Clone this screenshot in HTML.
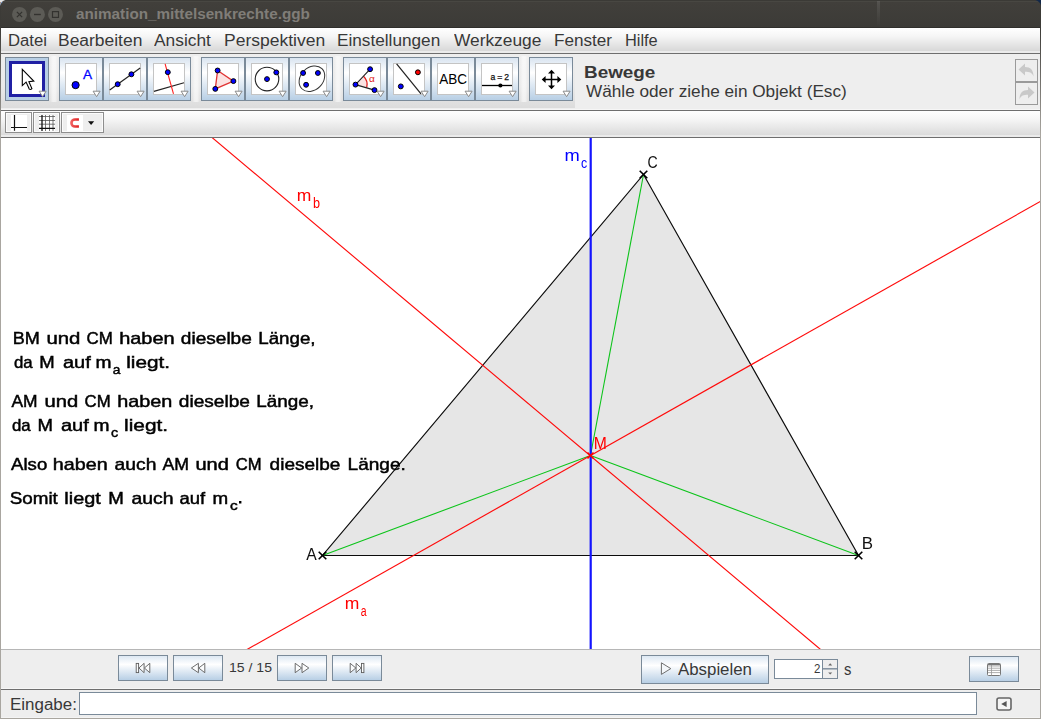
<!DOCTYPE html>
<html><head><meta charset="utf-8"><title>animation_mittelsenkrechte.ggb</title>
<style>
html,body{margin:0;padding:0;}
body{width:1041px;height:719px;overflow:hidden;background:#eeeeee;position:relative;font-family:"Liberation Sans",sans-serif;}
.abs{position:absolute;}
.t{position:absolute;white-space:nowrap;line-height:1;color:#333;font-size:16px;transform-origin:0 0;}
#title{left:0;top:0;width:1041px;height:28px;background:linear-gradient(#3b3a36 0px,#3b3a36 1px,#484742 1px,#484742 2px,#413f3b 2px,#3c3b37 27px,#302f2c 27px,#302f2c 28px);}
#menubar{left:1px;top:28px;width:1039px;height:25px;background:linear-gradient(#ffffff 0px,#f6f6f6 8px,#d8d8d8 23px,#ebebeb 23px,#ebebeb 25px);}
#toolbar{left:1px;top:54px;width:574px;height:54px;background:linear-gradient(#eeeeee 0%,#eaeaea 60%,#dcdcdc 100%);}
.tb{position:absolute;top:57px;width:42px;height:42px;border:1px solid #7a8a99;background:linear-gradient(#d9e4f0 0%,#ffffff 35%,#e3ecf5 60%,#b8cfe5 100%);}
.tb .ic{position:absolute;left:5px;top:5px;width:30px;height:30px;border:1px solid #c4c4c4;background:#fff;}
.tb svg.i{position:absolute;left:5px;top:5px;width:32px;height:32px;}
.tb svg.dd{position:absolute;left:32px;top:32px;width:10px;height:8px;}
.nb{position:absolute;border:1px solid #7a8a99;background:linear-gradient(#dde8f3 0%,#ffffff 35%,#e3ecf5 60%,#b8cfe5 100%);box-sizing:border-box;}
.sb{position:absolute;top:112px;height:21px;border:1px solid #8e8e8e;box-sizing:border-box;background:#eeeeee;box-shadow:inset 0 0 0 1px #fbfbfb;}
</style></head><body>
<div class="abs" id="title"></div>
<div class="abs" id="menubar"></div>
<div class="abs" style="left:1px;top:53px;width:1039px;height:1px;background:#6e6e6e"></div>
<div class="abs" id="toolbar"></div>
<div class="abs" style="left:1px;top:109px;width:1039px;height:1px;background:#f6f6f6"></div>
<div class="abs" style="left:1px;top:110px;width:1039px;height:1px;background:#6e6e6e"></div>
<div class="abs" id="stylebar" style="left:1px;top:111px;width:1039px;height:26px;background:linear-gradient(#fefefe 0px,#f6f6f6 8px,#dbdbdb 24px,#ebebeb 24px,#ebebeb 26px)"></div>
<div class="abs" style="left:1px;top:137px;width:1039px;height:1px;background:#6e6e6e"></div>
<div class="abs" id="canvas" style="left:1px;top:138px;width:1039px;height:511px;background:#fff;overflow:hidden"></div>
<div class="abs" style="left:1px;top:649px;width:1039px;height:1px;background:#b6b6b6"></div>
<div class="abs" style="left:1px;top:688px;width:1039px;height:1px;background:#f6f6f6"></div>
<div class="abs" style="left:1px;top:689px;width:1039px;height:1px;background:#6e6e6e"></div>
<div class="abs" style="left:1px;top:717px;width:1039px;height:1px;background:#f4f4f4"></div>
<div class="abs" style="left:0px;top:718px;width:1041px;height:1px;background:#a9a6a0"></div>
<div class="abs" style="left:0;top:4px;width:1px;height:715px;background:linear-gradient(#3c3b37 0px,#3c3b37 24px,#a9a6a0 130px,#a9a6a0 100%)"></div>
<div class="abs" style="left:1040px;top:4px;width:1px;height:715px;background:linear-gradient(#3c3b37 0px,#3c3b37 24px,#a9a6a0 130px,#a9a6a0 100%)"></div>
<svg class="abs" style="left:0;top:0" width="80" height="28" viewBox="0 0 80 28">
<circle cx="19.5" cy="14.4" r="7.5" fill="#5c5b56"/><circle cx="37.4" cy="14.4" r="7.5" fill="#5c5b56"/><circle cx="55.5" cy="14.4" r="7.5" fill="#5c5b56"/>
<path d="M16.9 11.9L22.1 17.1M22.1 11.9L16.9 17.1" stroke="#33322f" stroke-width="1.3" fill="none"/>
<path d="M34 14.5H40.8" stroke="#33322f" stroke-width="1.4" fill="none"/>
<rect x="52.5" y="11.6" width="6" height="5.8" stroke="#33322f" stroke-width="1.2" fill="none"/>
</svg>
<div class="abs" style="left:877px;top:1px;width:3px;height:26px;background:linear-gradient(rgba(255,255,255,0.10),rgba(255,255,255,0.05) 50%,rgba(255,255,255,0.0))"></div>
<svg class="abs" style="left:0;top:0" width="1041" height="8" viewBox="0 0 1041 8">
<path d="M0 0H5.3Q1.6 0.9 0 5.4Z" fill="#e6e6e6"/><rect x="0" y="2" width="1" height="1.4" fill="#b08c7c"/><rect x="1" y="2" width="1.2" height="1.2" fill="#7aa0d0"/><rect x="0" y="3.6" width="1" height="1.6" fill="#6f8194"/>
<path d="M1041 0H1035.4Q1039.6 1.2 1041 5.2Z" fill="#12284a"/>
</svg>
<div class="tb" style="left:5px;background:#b8cfe5"><div class="ic" style="left:3px;top:3px;border:3px solid #2020a4;"></div>
<svg class="i" viewBox="0 0 32 32"><path d="M11.3 6.4V22.6L15.1 19.1L18.3 26.1Q19.6 27 20.9 25.6L17.9 18.6L22.8 18Z" fill="#fff" stroke="#000" stroke-width="1.1" stroke-linejoin="miter"/></svg>
<svg class="dd" viewBox="0 0 10 8"><path d="M1.1 1.2H8.1L4.6 6.7Z" fill="#fff" stroke="#8a8a8a" stroke-width="1"/></svg></div>
<div class="tb" style="left:59px"><div class="ic"></div>
<svg class="i" viewBox="0 0 32 32"><circle cx="10.6" cy="22.1" r="3.6" fill="#0000ff" stroke="#000" stroke-width="1"/><text x="17.9" y="16.1" font-family="Liberation Sans, sans-serif" font-size="13.6" fill="#0000ff" stroke="#0000ff" stroke-width="0.3">A</text></svg>
<svg class="dd" viewBox="0 0 10 8"><path d="M1.1 1.2H8.1L4.6 6.7Z" fill="#fff" stroke="#8a8a8a" stroke-width="1"/></svg></div>
<div class="tb" style="left:103px"><div class="ic"></div>
<svg class="i" viewBox="0 0 32 32"><line x1="0.7" y1="26.9" x2="31.2" y2="5.1" stroke="#222" stroke-width="1.2"/><circle cx="8.7" cy="21.2" r="2.45" fill="#0000ff" stroke="#000" stroke-width="1"/><circle cx="22.4" cy="11.3" r="2.45" fill="#0000ff" stroke="#000" stroke-width="1"/></svg>
<svg class="dd" viewBox="0 0 10 8"><path d="M1.1 1.2H8.1L4.6 6.7Z" fill="#fff" stroke="#8a8a8a" stroke-width="1"/></svg></div>
<div class="tb" style="left:147px"><div class="ic"></div>
<svg class="i" viewBox="0 0 32 32"><line x1="0.9" y1="28.4" x2="31" y2="19.8" stroke="#222" stroke-width="1.1"/><line x1="12.1" y1="0.8" x2="20.5" y2="30.9" stroke="#ff2020" stroke-width="1.1"/><circle cx="14.8" cy="9.2" r="2.45" fill="#0000ff" stroke="#000" stroke-width="1"/></svg>
<svg class="dd" viewBox="0 0 10 8"><path d="M1.1 1.2H8.1L4.6 6.7Z" fill="#fff" stroke="#8a8a8a" stroke-width="1"/></svg></div>
<div class="tb" style="left:201px"><div class="ic"></div>
<svg class="i" viewBox="0 0 32 32"><polygon points="10.6,7.5 26.4,18.1 8.3,25.9" fill="#fbe2e2" stroke="#e03434" stroke-width="1.3"/><circle cx="10.6" cy="7.5" r="2.45" fill="#0000ff" stroke="#000" stroke-width="1"/><circle cx="26.4" cy="18.1" r="2.45" fill="#0000ff" stroke="#000" stroke-width="1"/><circle cx="8.3" cy="25.9" r="2.45" fill="#0000ff" stroke="#000" stroke-width="1"/></svg>
<svg class="dd" viewBox="0 0 10 8"><path d="M1.1 1.2H8.1L4.6 6.7Z" fill="#fff" stroke="#8a8a8a" stroke-width="1"/></svg></div>
<div class="tb" style="left:245px"><div class="ic"></div>
<svg class="i" viewBox="0 0 32 32"><circle cx="16" cy="16.1" r="11.8" fill="none" stroke="#222" stroke-width="1.1"/><circle cx="16" cy="16.1" r="2.45" fill="#0000ff" stroke="#000" stroke-width="1"/><circle cx="25.3" cy="9.4" r="2.45" fill="#0000ff" stroke="#000" stroke-width="1"/></svg>
<svg class="dd" viewBox="0 0 10 8"><path d="M1.1 1.2H8.1L4.6 6.7Z" fill="#fff" stroke="#8a8a8a" stroke-width="1"/></svg></div>
<div class="tb" style="left:289px"><div class="ic"></div>
<svg class="i" viewBox="0 0 32 32"><ellipse cx="16.9" cy="15.7" rx="14.2" ry="11.2" transform="rotate(-45 16.9 15.7)" fill="none" stroke="#333" stroke-width="1"/><circle cx="8.1" cy="10" r="2.45" fill="#0000ff" stroke="#000" stroke-width="1"/><circle cx="22.9" cy="10" r="2.45" fill="#0000ff" stroke="#000" stroke-width="1"/><circle cx="11.1" cy="21.8" r="2.45" fill="#0000ff" stroke="#000" stroke-width="1"/></svg>
<svg class="dd" viewBox="0 0 10 8"><path d="M1.1 1.2H8.1L4.6 6.7Z" fill="#fff" stroke="#8a8a8a" stroke-width="1"/></svg></div>
<div class="tb" style="left:343px"><div class="ic"></div>
<svg class="i" viewBox="0 0 32 32"><path d="M6.5 21.6L14.5 13.2A11.6 11.6 0 0 1 17.7 24.6Z" fill="#fbe2e2" stroke="none"/><path d="M14.5 13.2A11.6 11.6 0 0 1 17.7 24.6" fill="none" stroke="#e02020" stroke-width="1.3"/><path d="M21.1 6.2L6.5 21.6L25.5 27.1" fill="none" stroke="#222" stroke-width="1.1"/><text x="20" y="19.3" font-family="Liberation Sans, sans-serif" font-size="9.5" fill="#e02020" textLength="5.8" lengthAdjust="spacingAndGlyphs">α</text><circle cx="6.5" cy="21.6" r="2.45" fill="#0000ff" stroke="#000" stroke-width="1"/><circle cx="21.1" cy="6.2" r="2.45" fill="#0000ff" stroke="#000" stroke-width="1"/><circle cx="25.5" cy="27.1" r="2.45" fill="#0000ff" stroke="#000" stroke-width="1"/></svg>
<svg class="dd" viewBox="0 0 10 8"><path d="M1.1 1.2H8.1L4.6 6.7Z" fill="#fff" stroke="#8a8a8a" stroke-width="1"/></svg></div>
<div class="tb" style="left:387px"><div class="ic"></div>
<svg class="i" viewBox="0 0 32 32"><line x1="3.6" y1="0.8" x2="28" y2="30.9" stroke="#222" stroke-width="1.2"/><circle cx="24.9" cy="9.3" r="2.45" fill="#ff0000" stroke="#000" stroke-width="1"/><circle cx="7.8" cy="23.4" r="2.45" fill="#0000ff" stroke="#000" stroke-width="1"/></svg>
<svg class="dd" viewBox="0 0 10 8"><path d="M1.1 1.2H8.1L4.6 6.7Z" fill="#fff" stroke="#8a8a8a" stroke-width="1"/></svg></div>
<div class="tb" style="left:431px"><div class="ic"></div>
<svg class="i" viewBox="0 0 32 32"><text x="2.2" y="20.8" font-family="Liberation Sans, sans-serif" font-size="13.8" fill="#000" textLength="27.8" lengthAdjust="spacingAndGlyphs">ABC</text></svg>
<svg class="dd" viewBox="0 0 10 8"><path d="M1.1 1.2H8.1L4.6 6.7Z" fill="#fff" stroke="#8a8a8a" stroke-width="1"/></svg></div>
<div class="tb" style="left:475px"><div class="ic"></div>
<svg class="i" viewBox="0 0 32 32"><text x="9.5" y="16.8" font-family="Liberation Sans, sans-serif" font-size="8.6" fill="#111" stroke="#111" stroke-width="0.25" textLength="18.6" lengthAdjust="spacing">a = 2</text><line x1="1" y1="22.5" x2="31" y2="22.5" stroke="#000" stroke-width="1.3"/><circle cx="19.4" cy="22.5" r="2.1" fill="#000"/></svg>
<svg class="dd" viewBox="0 0 10 8"><path d="M1.1 1.2H8.1L4.6 6.7Z" fill="#fff" stroke="#8a8a8a" stroke-width="1"/></svg></div>
<div class="tb" style="left:529px"><div class="ic"></div>
<svg class="i" viewBox="0 0 32 32"><path d="M16.5 8.5V24.5M8.5 16.5H24.5" stroke="#000" stroke-width="1.5" fill="none"/><path d="M16.5 6.7L20 10.6H13ZM16.5 26.3L20 22.4H13ZM6.7 16.5L10.6 13V20ZM26.3 16.5L22.4 13V20Z" fill="#000"/></svg>
<svg class="dd" viewBox="0 0 10 8"><path d="M1.1 1.2H8.1L4.6 6.7Z" fill="#fff" stroke="#8a8a8a" stroke-width="1"/></svg></div>
<div class="abs" style="left:50px;top:56px;width:8px;height:46px;background:linear-gradient(to right,rgba(255,255,255,0),rgba(255,255,255,0.55) 35%,rgba(255,255,255,0.55) 65%,rgba(255,255,255,0))"></div>
<div class="abs" style="left:192px;top:56px;width:8px;height:46px;background:linear-gradient(to right,rgba(255,255,255,0),rgba(255,255,255,0.55) 35%,rgba(255,255,255,0.55) 65%,rgba(255,255,255,0))"></div>
<div class="abs" style="left:334px;top:56px;width:8px;height:46px;background:linear-gradient(to right,rgba(255,255,255,0),rgba(255,255,255,0.55) 35%,rgba(255,255,255,0.55) 65%,rgba(255,255,255,0))"></div>
<div class="abs" style="left:520px;top:56px;width:8px;height:46px;background:linear-gradient(to right,rgba(255,255,255,0),rgba(255,255,255,0.55) 35%,rgba(255,255,255,0.55) 65%,rgba(255,255,255,0))"></div>
<div class="abs" style="left:1015px;top:59px;width:21px;height:21px;border:1px solid #9a9a9a;background:#eeeeee"></div>
<div class="abs" style="left:1015px;top:82px;width:21px;height:21px;border:1px solid #9a9a9a;background:#eeeeee"></div>
<svg class="abs" style="left:1015px;top:59px" width="23" height="46" viewBox="0 0 23 46"><path d="M3.5 10.5L10 4.5V8C15.5 8 18.5 11 18.5 17.5C17 13.5 14.5 12.8 10 12.8V16.5Z" fill="#c9c9c9"/><path d="M19.5 33.5L13 27.5V31C7.5 31 4.5 34 4.5 40.5C6 36.5 8.5 35.8 13 35.8V39.5Z" fill="#c9c9c9"/></svg>
<div class="sb" style="left:5px;width:27px"></div><div class="sb" style="left:33px;width:27px"></div><div class="sb" style="left:61px;width:43px"></div>
<svg class="abs" style="left:0;top:111px" width="110" height="26" viewBox="0 0 110 26"><defs><linearGradient id="mg" gradientUnits="userSpaceOnUse" x1="70" x2="79" y1="0" y2="0"><stop offset="0" stop-color="#f46a6a"/><stop offset="1" stop-color="#de1c1c"/></linearGradient></defs><rect x="11" y="4" width="16" height="16" fill="#fff"/><rect x="39" y="4" width="16" height="16" fill="#fff"/><rect x="67" y="4" width="16" height="16" fill="#fff"/><path d="M14.5 4V19.8M11 16.5H27" stroke="#111" stroke-width="1.2" fill="none"/><path d="M45.5 4V20M49.5 4V20M53 4V20M39 5.5H55M39 9.5H55M39 13.2H55" stroke="#555" stroke-width="0.8" fill="none"/><path d="M42 4V20M39 17.3H55" stroke="#111" stroke-width="1.3" fill="none"/><path d="M78.9 8.45H74.95A3.55 3.55 0 0 0 74.95 15.55H78.9" stroke="url(#mg)" stroke-width="2.6" fill="none" stroke-linecap="butt"/><path d="M88 10.3H94.2L91.1 14Z" fill="#111"/></svg>
<div class="nb" style="left:118px;top:655px;width:50px;height:26px"></div>
<div class="nb" style="left:173px;top:655px;width:50px;height:26px"></div>
<div class="nb" style="left:277px;top:655px;width:50px;height:26px"></div>
<div class="nb" style="left:332px;top:655px;width:50px;height:26px"></div>
<div class="nb" style="left:641px;top:655px;width:128px;height:29px"></div>
<div class="nb" style="left:969px;top:656px;width:50px;height:26px"></div>
<svg class="abs" style="left:0;top:0" width="1041" height="719" viewBox="0 0 1041 719">
<rect x="136.2" y="663.4" width="2.4" height="9.2" fill="#fbfcfd" stroke="#5c5c5c" stroke-width="0.9" stroke-linejoin="miter"/>
<path d="M138.9 668L144.1 663.3V672.7Z" fill="#fbfcfd" stroke="#5c5c5c" stroke-width="0.9" stroke-linejoin="miter"/>
<path d="M144.4 668L149.8 663.3V672.7Z" fill="#fbfcfd" stroke="#5c5c5c" stroke-width="0.9" stroke-linejoin="miter"/>
<path d="M191.4 668L198.4 663.3V672.7Z" fill="#fbfcfd" stroke="#5c5c5c" stroke-width="0.9" stroke-linejoin="miter"/>
<path d="M198.7 668L204.8 663.3V672.7Z" fill="#fbfcfd" stroke="#5c5c5c" stroke-width="0.9" stroke-linejoin="miter"/>
<path d="M301.6 668L295.2 663.3V672.7Z" fill="#fbfcfd" stroke="#5c5c5c" stroke-width="0.9" stroke-linejoin="miter"/>
<path d="M308.8 668L302.0 663.3V672.7Z" fill="#fbfcfd" stroke="#5c5c5c" stroke-width="0.9" stroke-linejoin="miter"/>
<path d="M355.8 668L350.2 663.3V672.7Z" fill="#fbfcfd" stroke="#5c5c5c" stroke-width="0.9" stroke-linejoin="miter"/>
<path d="M361.2 668L356.1 663.3V672.7Z" fill="#fbfcfd" stroke="#5c5c5c" stroke-width="0.9" stroke-linejoin="miter"/>
<rect x="361.5" y="663.4" width="2.4" height="9.2" fill="#fbfcfd" stroke="#5c5c5c" stroke-width="0.9" stroke-linejoin="miter"/>
<path d="M661.4 662.8L670.8 668.6L661.4 674.4Z" fill="#f4f7fa" stroke="#6e6e6e" stroke-width="1"/>
<rect x="774.5" y="659.5" width="63" height="19" fill="#fff" stroke="#7a8a99" stroke-width="1"/>
<rect x="822.5" y="659.5" width="15" height="19" fill="#eeeeee" stroke="#7a8a99" stroke-width="1"/>
<line x1="822" y1="668.8" x2="838" y2="668.8" stroke="#7a8a99" stroke-width="1.4"/>
<path d="M828.2 665.4L830.2 663.2L832.2 665.4Z M828.2 672.4L830.2 674.6L832.2 672.4Z" fill="#666"/>
<rect x="987.5" y="663.5" width="13" height="12" rx="1" fill="#fff" stroke="#777" stroke-width="1"/>
<path d="M988 666H1000M988 668.2H1000M988 670.4H1000M988 672.6H1000" stroke="#999" stroke-width="0.8"/>
<path d="M991.5 664V675.5" stroke="#999" stroke-width="0.8"/><path d="M988 664.6H1000" stroke="#777" stroke-width="1.2"/>
<rect x="79.5" y="692.5" width="897" height="22" fill="#fff" stroke="#7a8a99" stroke-width="1"/>
<rect x="997" y="698" width="14" height="12" rx="2" fill="#f4f4f4" stroke="#666" stroke-width="1.6"/>
<path d="M1001.2 704L1006.6 701V707Z" fill="#555"/>
</svg>
<span class="t" style="left:76.20px;top:7.43px;font-size:14.5px;font-weight:bold;color:#807d78;transform:scaleX(1.0516)">animation_mittelsenkrechte.ggb</span>
<span class="t" style="left:7.76px;top:33.06px;font-size:16px;font-weight:normal;color:#383838;transform:scaleX(1.0420)">Datei</span>
<span class="t" style="left:58.11px;top:33.06px;font-size:16px;font-weight:normal;color:#383838;transform:scaleX(1.0902)">Bearbeiten</span>
<span class="t" style="left:154.00px;top:33.06px;font-size:16px;font-weight:normal;color:#383838;transform:scaleX(1.0844)">Ansicht</span>
<span class="t" style="left:224.11px;top:33.06px;font-size:16px;font-weight:normal;color:#383838;transform:scaleX(1.0939)">Perspektiven</span>
<span class="t" style="left:337.33px;top:33.06px;font-size:16px;font-weight:normal;color:#383838;transform:scaleX(1.0746)">Einstellungen</span>
<span class="t" style="left:453.80px;top:33.06px;font-size:16px;font-weight:normal;color:#383838;transform:scaleX(1.0826)">Werkzeuge</span>
<span class="t" style="left:553.63px;top:33.06px;font-size:16px;font-weight:normal;color:#383838;transform:scaleX(1.0702)">Fenster</span>
<span class="t" style="left:624.68px;top:33.06px;font-size:16px;font-weight:normal;color:#383838;transform:scaleX(1.0222)">Hilfe</span>
<span class="t" style="left:584.32px;top:65.06px;font-size:16px;font-weight:bold;color:#383838;transform:scaleX(1.1801)">Bewege</span>
<span class="t" style="left:585.90px;top:84.06px;font-size:16px;font-weight:normal;color:#383838;transform:scaleX(1.0741)">Wähle oder ziehe ein Objekt (Esc)</span>
<span class="t" style="left:228.60px;top:660.90px;font-size:13px;font-weight:normal;color:#383838;transform:scaleX(1.0803)">15 / 15</span>
<span class="t" style="left:678.40px;top:662.06px;font-size:16px;font-weight:normal;color:#383838;transform:scaleX(1.0523)">Abspielen</span>
<span class="t" style="left:814.00px;top:661.80px;font-size:13px;font-weight:normal;color:#383838;transform:scaleX(0.8857)">2</span>
<span class="t" style="left:843.80px;top:662.06px;font-size:16px;font-weight:normal;color:#383838;transform:scaleX(0.9250)">s</span>
<span class="t" style="left:10.14px;top:697.06px;font-size:16px;font-weight:normal;color:#383838;transform:scaleX(1.0590)">Eingabe:</span>
<svg class="abs" style="left:0;top:0" width="1041" height="719" viewBox="0 0 1041 719">
<defs><clipPath id="cv"><rect x="1" y="138" width="1039" height="511"/></clipPath></defs>
<g clip-path="url(#cv)" fill="none" stroke-linecap="butt">
<polygon points="322.5,555.5 858.5,555.5 643.5,174.5" fill="#e6e6e6" stroke="#0c0c0c" stroke-width="1.15"/>
<line x1="643.5" y1="174.5" x2="590.5" y2="455.5" stroke="#0cc41a" stroke-width="1.1"/>
<line x1="322.5" y1="555.5" x2="590.5" y2="455.5" stroke="#0cc41a" stroke-width="1.1"/>
<line x1="858.5" y1="555.5" x2="590.5" y2="455.5" stroke="#0cc41a" stroke-width="1.1"/>
<line x1="199.3" y1="126.8" x2="839.6" y2="665.5" stroke="#ff0a0a" stroke-width="1.15"/>
<line x1="230" y1="659.1" x2="1050" y2="196" stroke="#ff0a0a" stroke-width="1.15"/>
<line x1="590.7" y1="130" x2="590.7" y2="660" stroke="#1414ff" stroke-width="2.2"/>
<g stroke="#000" stroke-width="1.6">
<path d="M318.7 551.7l7.6 7.6M318.7 559.3l7.6-7.6"/>
<path d="M854.7 551.7l7.6 7.6M854.7 559.3l7.6-7.6"/>
<path d="M639.7 170.7l7.6 7.6M639.7 178.3l7.6-7.6"/>
</g>
<path d="M587.5 452.5l6 6M587.5 458.5l6-6" stroke="#ff0000" stroke-width="1.5"/>
</g>
</svg>
<svg class="abs" style="left:0;top:0;will-change:transform" width="1041" height="719" viewBox="0 0 1041 719"><g font-family="Liberation Sans, sans-serif">
<text font-size="16" fill="#111" transform="translate(306.20 559.50) scale(0.9818 1)">A</text>
<text font-size="16" fill="#111" transform="translate(861.84 548.50) scale(1.0556 1)">B</text>
<text font-size="16" fill="#111" transform="translate(647.60 167.80) scale(0.8818 1)">C</text>
<text font-size="16" fill="#ff0000" transform="translate(593.82 448.80) scale(0.9833 1)">M</text>
<text font-size="17" fill="#0000ff" transform="translate(564.52 161.30) scale(1.0769 1)">m</text>
<text font-size="14.5" fill="#0000ff" transform="translate(581.00 168.00) scale(0.8571 1)">c</text>
<text font-size="17" fill="#ff0000" transform="translate(296.77 200.90) scale(1.0308 1)">m</text>
<text font-size="14.5" fill="#ff0000" transform="translate(313.00 208.00) scale(0.8750 1)">b</text>
<text font-size="17" fill="#ff0000" transform="translate(344.67 608.90) scale(1.0308 1)">m</text>
<text font-size="14.5" fill="#ff0000" transform="translate(360.80 615.90) scale(0.7222 1)">a</text>
</g></svg>
<svg class="abs" style="left:0;top:0;will-change:transform" width="1041" height="719" viewBox="0 0 1041 719"><g font-family="Liberation Sans, sans-serif" font-size="16" font-weight="normal" fill="#000" style="stroke:#000;stroke-width:0.45px;">
<text x="0" y="0" transform="translate(12.77 343.60) scale(1.1292 1)">BM</text>
<text x="0" y="0" transform="translate(46.43 343.60) scale(1.2703 1)">und</text>
<text x="0" y="0" transform="translate(86.50 343.60) scale(1.0548 1)">CM</text>
<text x="0" y="0" transform="translate(119.15 343.60) scale(1.2467 1)">haben</text>
<text x="0" y="0" transform="translate(180.80 343.60) scale(1.1926 1)">dieselbe</text>
<text x="0" y="0" transform="translate(258.23 343.60) scale(1.1728 1)">Länge,</text>
<text x="0" y="0" transform="translate(13.90 367.50) scale(1.0504 1)">da</text>
<text x="0" y="0" transform="translate(39.34 367.50) scale(1.1583 1)">M</text>
<text x="0" y="0" transform="translate(62.90 367.50) scale(1.2502 1)">auf</text>
<text x="0" y="0" transform="translate(95.50 367.50) scale(1.2000 1)">m</text>
<text x="0" y="0" transform="translate(126.20 367.50) scale(1.2982 1)">liegt.</text>
<text x="0" y="0" transform="translate(11.40 406.60) scale(1.0899 1)">AM</text>
<text x="0" y="0" transform="translate(44.44 406.60) scale(1.2623 1)">und</text>
<text x="0" y="0" transform="translate(84.60 406.60) scale(1.0466 1)">CM</text>
<text x="0" y="0" transform="translate(117.16 406.60) scale(1.2396 1)">haben</text>
<text x="0" y="0" transform="translate(178.80 406.60) scale(1.1942 1)">dieselbe</text>
<text x="0" y="0" transform="translate(256.32 406.60) scale(1.1791 1)">Länge,</text>
<text x="0" y="0" transform="translate(11.90 430.60) scale(1.0504 1)">da</text>
<text x="0" y="0" transform="translate(37.54 430.60) scale(1.1583 1)">M</text>
<text x="0" y="0" transform="translate(60.90 430.60) scale(1.2546 1)">auf</text>
<text x="0" y="0" transform="translate(93.50 430.60) scale(1.2000 1)">m</text>
<text x="0" y="0" transform="translate(124.10 430.60) scale(1.3014 1)">liegt.</text>
<text x="0" y="0" transform="translate(11.10 469.80) scale(1.1625 1)">Also</text>
<text x="0" y="0" transform="translate(52.87 469.80) scale(1.2326 1)">haben</text>
<text x="0" y="0" transform="translate(114.60 469.80) scale(1.2043 1)">auch</text>
<text x="0" y="0" transform="translate(162.40 469.80) scale(1.1068 1)">AM</text>
<text x="0" y="0" transform="translate(195.45 469.80) scale(1.2542 1)">und</text>
<text x="0" y="0" transform="translate(235.70 469.80) scale(1.0385 1)">CM</text>
<text x="0" y="0" transform="translate(269.60 469.80) scale(1.1892 1)">dieselbe</text>
<text x="0" y="0" transform="translate(347.51 469.80) scale(1.1937 1)">Länge.</text>
<text x="0" y="0" transform="translate(9.70 503.50) scale(1.1772 1)">Somit</text>
<text x="0" y="0" transform="translate(64.36 503.50) scale(1.2419 1)">liegt</text>
<text x="0" y="0" transform="translate(108.33 503.50) scale(1.1667 1)">M</text>
<text x="0" y="0" transform="translate(131.50 503.50) scale(1.2131 1)">auch</text>
<text x="0" y="0" transform="translate(179.50 503.50) scale(1.1537 1)">auf</text>
<text x="0" y="0" transform="translate(212.52 503.50) scale(1.1750 1)">m</text>
</g><g font-family="Liberation Sans, sans-serif" font-size="12.5" font-weight="normal" fill="#000" style="stroke:#000;stroke-width:0.45px;">
<text x="0" y="0" transform="translate(112.70 374.00) scale(1.1000 1)">a</text>
<text x="0" y="0" transform="translate(111.00 437.00) scale(1.1500 1)">c</text>
<text x="0" y="0" transform="translate(229.90 509.90) scale(1.2333 1)">c</text>
</g><rect x="239.0" y="501.0" width="2.4" height="2.5" fill="#000"/></svg>

</body></html>
